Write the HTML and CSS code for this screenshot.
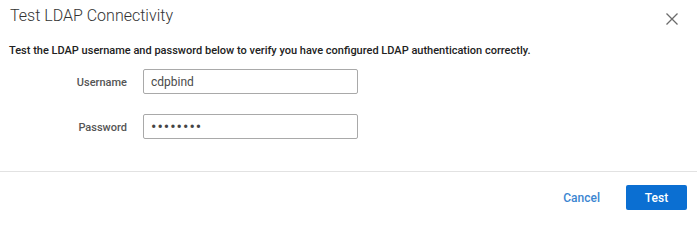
FILE: index.html
```html
<!DOCTYPE html>
<html lang="en">
<head>
<meta charset="utf-8">
<title>Test LDAP Connectivity</title>
<link rel="stylesheet" href="styles.css">
</head>
<body>
<div class="dialog">
  <div class="header">
    <h1 class="title">Test LDAP Connectivity</h1>
    <button class="close" aria-label="Close">
      <svg width="12" height="12" viewBox="0 0 12 12"><path d="M0.5 0.5 L11.5 11.5 M11.5 0.5 L0.5 11.5" stroke="#6b6b6b" stroke-width="1.3" fill="none"/></svg>
    </button>
  </div>
  <p class="desc">Test the LDAP username and password below to verify you have configured LDAP authentication correctly.</p>
  <div class="form">
    <label class="label" for="u">Username</label>
    <input class="field" id="u" type="text" value="cdpbind">
    <label class="label" for="p">Password</label>
    <input class="field field-secret" id="p" type="password" value="12345678">
  </div>
  <div class="divider"></div>
  <div class="footer">
    <button class="btn-cancel">Cancel</button>
    <button class="btn-test">Test</button>
  </div>
</div>
</body>
</html>
```
FILE: styles.css
```css
html, body {
  margin: 0;
  padding: 0;
  background: #ffffff;
}
body {
  font-family: Roboto, "Liberation Sans", Arial, sans-serif;
  width: 697px;
  height: 216px;
  overflow: hidden;
}
.dialog {
  width: 697px;
}
.header {
  display: flex;
  justify-content: space-between;
  align-items: center;
  height: 30px;
  padding: 0 19px 0 10px;
}
.title {
  margin: 0;
  font-size: 16px;
  font-weight: 300;
  line-height: 30px;
  color: #333333;
  padding-top: 1px;
}
.close {
  border: 0;
  background: none;
  padding: 0;
  margin-top: 7px;
  width: 12px;
  height: 12px;
  display: flex;
}
.desc {
  margin: 14px 0 0 9px;
  font-size: 11px;
  line-height: 14px;
  font-weight: 500;
  color: #222222;
}
.form {
  display: grid;
  grid-template-columns: 127px 215px;
  column-gap: 16px;
  row-gap: 20px;
  align-items: center;
  margin-top: 11px;
}
.label {
  justify-self: end;
  font-size: 11px;
  font-weight: 500;
  color: #555555;
  padding-top: 2px;
}
.field {
  box-sizing: border-box;
  width: 215px;
  height: 25px;
  margin: 0;
  padding: 0 7px;
  border: 1px solid #a9a9a9;
  border-radius: 2px;
  font-family: Roboto, "Liberation Sans", Arial, sans-serif;
  font-size: 12px;
  color: #4a4a4a;
  outline: none;
}
.field-secret {
  font-size: 16px;
  letter-spacing: 1px;
  color: #444444;
}
.divider {
  height: 1px;
  background: #e2e2e2;
  margin-top: 32px;
}
.footer {
  display: flex;
  justify-content: flex-end;
  align-items: center;
  padding: 13px 10px 0 0;
}
.btn-cancel {
  border: 0;
  background: none;
  padding: 0;
  margin-right: 26px;
  font-family: Roboto, "Liberation Sans", Arial, sans-serif;
  font-size: 12px;
  font-weight: 500;
  color: #3b86d1;
}
.btn-test {
  width: 61px;
  height: 25px;
  border: 0;
  border-radius: 2px;
  background: #0b6fd2;
  color: #ffffff;
  font-family: Roboto, "Liberation Sans", Arial, sans-serif;
  font-size: 12px;
  font-weight: 500;
  padding: 0;
}
```
